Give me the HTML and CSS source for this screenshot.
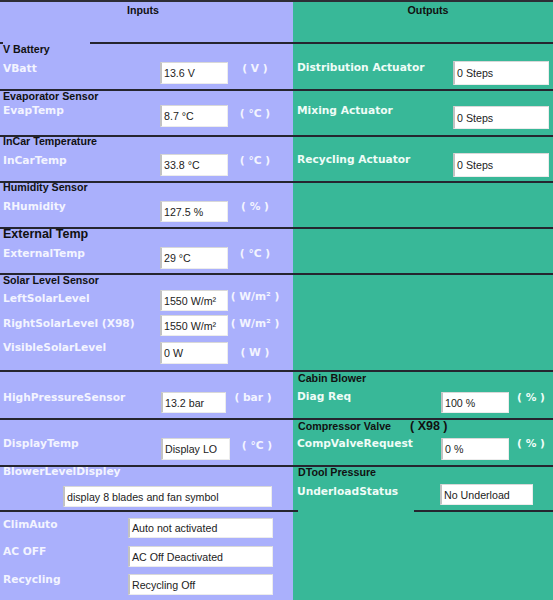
FILE: index.html
```html
<!DOCTYPE html>
<html lang="en">
<head>
<meta charset="utf-8">
<title>Climate Diagnostics</title>
<link rel="stylesheet" href="styles.css">
</head>
<body>
<div class="page">
  <div class="topbar"></div>

  <div class="row row-head">
    <div class="cell in"><div class="coltitle coltitle-in">Inputs</div></div>
    <div class="cell out"><div class="coltitle coltitle-out">Outputs</div></div>
  </div>
  <div class="rule rule-head"><span class="seg seg-tick"></span><span class="seg seg-long"></span></div>

  <div class="row r1">
    <div class="cell in">
      <div class="title">V Battery</div>
      <div class="field">
        <span class="lbl">VBatt</span><span class="box">13.6 V</span><span class="unit">( V )</span>
      </div>
    </div>
    <div class="cell out">
      <div class="field">
        <span class="lbl">Distribution Actuator</span><span class="box">0 Steps</span>
      </div>
    </div>
  </div>
  <div class="rule"></div>

  <div class="row r2">
    <div class="cell in">
      <div class="title">Evaporator Sensor</div>
      <div class="field">
        <span class="lbl">EvapTemp</span><span class="box">8.7 °C</span><span class="unit">( °C )</span>
      </div>
    </div>
    <div class="cell out">
      <div class="field">
        <span class="lbl">Mixing Actuator</span><span class="box">0 Steps</span>
      </div>
    </div>
  </div>
  <div class="rule"></div>

  <div class="row r3">
    <div class="cell in">
      <div class="title">InCar Temperature</div>
      <div class="field">
        <span class="lbl">InCarTemp</span><span class="box">33.8 °C</span><span class="unit">( °C )</span>
      </div>
    </div>
    <div class="cell out">
      <div class="field">
        <span class="lbl">Recycling Actuator</span><span class="box">0 Steps</span>
      </div>
    </div>
  </div>
  <div class="rule"></div>

  <div class="row r4">
    <div class="cell in">
      <div class="title">Humidity Sensor</div>
      <div class="field">
        <span class="lbl">RHumidity</span><span class="box">127.5 %</span><span class="unit">( % )</span>
      </div>
    </div>
    <div class="cell out"></div>
  </div>
  <div class="rule"></div>

  <div class="row r5">
    <div class="cell in">
      <div class="title title-lg">External Temp</div>
      <div class="field">
        <span class="lbl">ExternalTemp</span><span class="box">29 °C</span><span class="unit">( °C )</span>
      </div>
    </div>
    <div class="cell out"></div>
  </div>
  <div class="rule"></div>

  <div class="row r6">
    <div class="cell in">
      <div class="title">Solar Level Sensor</div>
      <div class="field fa">
        <span class="lbl">LeftSolarLevel</span><span class="box">1550 W/m²</span><span class="unit">( W/m² )</span>
      </div>
      <div class="field fb">
        <span class="lbl">RightSolarLevel (X98)</span><span class="box">1550 W/m²</span><span class="unit">( W/m² )</span>
      </div>
      <div class="field fc">
        <span class="lbl">VisibleSolarLevel</span><span class="box">0 W</span><span class="unit">( W )</span>
      </div>
    </div>
    <div class="cell out"></div>
  </div>
  <div class="rule"></div>

  <div class="row r7">
    <div class="cell in">
      <div class="field">
        <span class="lbl">HighPressureSensor</span><span class="box">13.2 bar</span><span class="unit">( bar )</span>
      </div>
    </div>
    <div class="cell out">
      <div class="title">Cabin Blower</div>
      <div class="field">
        <span class="lbl">Diag Req</span><span class="box">100 %</span><span class="unit">( % )</span>
      </div>
    </div>
  </div>
  <div class="rule"></div>

  <div class="row r8">
    <div class="cell in">
      <div class="field">
        <span class="lbl">DisplayTemp</span><span class="box">Display LO</span><span class="unit">( °C )</span>
      </div>
    </div>
    <div class="cell out">
      <div class="title title-split"><span>Compressor Valve</span><span class="x98">( X98 )</span></div>
      <div class="field">
        <span class="lbl">CompValveRequest</span><span class="box">0 %</span><span class="unit">( % )</span>
      </div>
    </div>
  </div>
  <div class="rule"></div>

  <div class="row r9">
    <div class="cell in">
      <div class="field fhead">
        <span class="lbl">BlowerLevelDispley</span>
      </div>
      <div class="field fwide">
        <span class="box">display 8 blades and fan symbol</span>
      </div>
    </div>
    <div class="cell out">
      <div class="title">DTool Pressure</div>
      <div class="field">
        <span class="lbl">UnderloadStatus</span><span class="box">No Underload</span>
      </div>
    </div>
  </div>
  <div class="rule rule-split"><span class="seg seg-left"></span><span class="seg seg-right"></span></div>

  <div class="row r10">
    <div class="cell in">
      <div class="field fa">
        <span class="lbl">ClimAuto</span><span class="box">Auto not activated</span>
      </div>
      <div class="field fb">
        <span class="lbl">AC OFF</span><span class="box">AC Off Deactivated</span>
      </div>
      <div class="field fc">
        <span class="lbl">Recycling</span><span class="box">Recycling Off</span>
      </div>
    </div>
    <div class="cell out"></div>
  </div>
</div>
</body>
</html>
```

FILE: styles.css
```css
* { box-sizing: border-box; }
html, body { margin: 0; padding: 0; }
body {
  background: #38b898;
  font-family: "Liberation Sans", Arial, sans-serif;
}

.page {
  width: 553px;
  height: 600px;
  overflow: hidden;
  background: linear-gradient(to right, #aab0fc 0, #aab0fc 293px, #38b898 293px, #38b898 100%);
}

.topbar { height: 2px; background: #2d2d35; }

.row { display: grid; grid-template-columns: 293px 260px; }
.cell { display: flex; flex-direction: column; align-items: flex-start; min-width: 0; }

.row-head { height: 40px; }
.coltitle {
  align-self: stretch;
  text-align: center;
  font-weight: bold;
  font-size: 10.67px;
  line-height: 12px;
  color: #111;
  margin-top: 2px;
}
.coltitle-in { padding-right: 7px; }
.coltitle-out { padding-left: 10px; }

/* horizontal rules */
.rule { height: 2px; background: #25252f; }
.rule-head, .rule-split { display: flex; background: transparent; }
.rule .seg { height: 2px; background: #25252f; }
.seg-tick { width: 3px; }
.seg-long { margin-left: 87px; flex: 1; }
.rule-split { justify-content: space-between; }
.seg-left { width: 298px; }
.seg-right { width: 139px; }

/* section titles */
.title {
  font-weight: bold;
  font-size: 10.67px;
  line-height: 12px;
  color: #111;
  white-space: nowrap;
  padding-left: 3px;
  margin-top: var(--tm, 0);
}
.out .title { padding-left: 5px; }
.title-lg { font-size: 12.5px; line-height: 14px; }
.title-split { display: flex; align-items: baseline; }
.x98 { font-size: 12.5px; line-height: 12px; margin-left: 19px; }

/* label / value / unit lines */
.field { display: flex; align-items: flex-start; margin-top: var(--fm, 0); }
.in .field { padding-left: 3px; }
.out .field { padding-left: 4px; }

.lbl, .unit {
  font-family: "DejaVu Sans", Verdana, sans-serif;
  font-weight: bold;
  font-size: 10.67px;
  line-height: 12px;
  white-space: nowrap;
}
.in .lbl, .in .unit { color: #f3f4ff; }
.out .lbl, .out .unit { color: #effcf7; }

.lbl { flex: none; width: var(--lw, 157px); margin-top: var(--lo, 0); }
.out .lbl { width: var(--lw, 156px); }
.unit { flex: none; width: 54px; text-align: center; margin-top: var(--uo, 0); }
.out .unit { width: 44px; }

.box {
  flex: none;
  display: flex;
  align-items: center;
  width: var(--bw, 68px);
  height: var(--bh, 22px);
  background: #fff;
  border: 1px solid #ececec;
  border-top-color: #d8d8d8;
  border-left: 2px solid #c2c2c2;
  padding-left: 2px;
  font-size: 10.67px;
  color: #222;
  white-space: nowrap;
  overflow: hidden;
}
.out .box { width: var(--bw, 96px); }

/* row geometry */
.r1 { height: 45px; }
.r2, .r3, .r4, .r5 { height: 44px; }
.r6 { height: 95px; }
.r7 { height: 46px; }
.r8 { height: 45px; }
.r9 { height: 43px; }
.r10 { height: 88px; }

.r1 .in { --tm: -1px; --fm: 7px; --lo: 1px; --uo: 1px; }
.r1 .out { --fm: 17px; --bh: 24px; --lo: 1px; }

.r2 .in { --tm: -1px; --fm: 3px; --lo: 0; --uo: 3px; }
.r2 .out { --fm: 15px; --bh: 23px; --lo: -1px; }

.r3 .in { --tm: -2px; --fm: 7px; --lo: 1px; --uo: 1px; }
.r3 .out { --fm: 16px; --bh: 24px; --lo: 1px; }

.r4 .in { --tm: -2px; --fm: 8px; --bh: 21px; }

.r5 .in { --tm: -2px; --fm: 6px; --lo: 1px; --uo: 1px; }

.r6 .in { --tm: -1px; }
.r6 .fa { --fm: 4px; --bh: 21px; --lo: 3px; --uo: 1px; }
.r6 .fb { --fm: 4px; --bh: 21px; --lo: 3px; --uo: 3px; }
.r6 .fc { --fm: 6px; --bh: 22px; --lo: 0; --uo: 5px; }

.r7 .in { --fm: 20px; --bh: 21px; --bw: 65px; --lw: 158px; }
.r7 .out { --tm: 0; --fm: 8px; --bh: 21px; --bw: 68px; --lw: 144px; --lo: -1px; }

.r8 .in { --fm: 18px; --bh: 22px; --bw: 69px; --lw: 158px; --uo: 2px; }
.r8 .out { --tm: 0; --fm: 6px; --bh: 22px; --bw: 68px; --lw: 144px; }

.r9 .in .fhead { --fm: -1px; }
.r9 .in .fwide { --fm: 8px; --bh: 21px; --bw: 209px; padding-left: 63px; }
.r9 .out { --tm: -1px; --fm: 6px; --bh: 21px; --bw: 93px; --lw: 143px; --lo: 2px; }

.r10 .in { --lw: 125px; --bw: 145px; }
.r10 .fa { --fm: 6px; --bh: 20px; --lo: 1px; }
.r10 .fb { --fm: 8px; --bh: 21px; }
.r10 .fc { --fm: 7px; --bh: 21px; }
```
